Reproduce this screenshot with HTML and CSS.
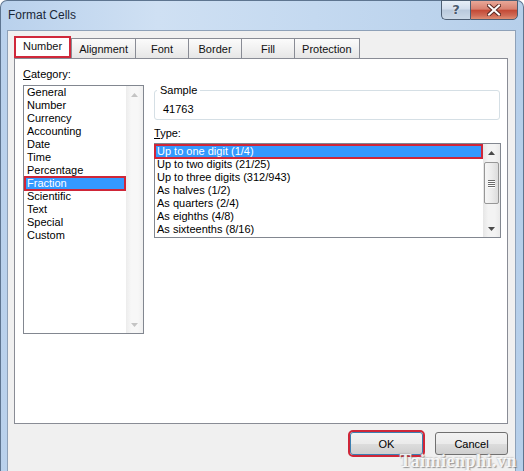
FILE: index.html
```html
<!DOCTYPE html>
<html>
<head>
<meta charset="utf-8">
<title>Format Cells</title>
<link rel="stylesheet" href="styles.css">
</head>
<body>
<div class="window">
  <div class="titlebar">
    <span class="title">Format Cells</span>
    <div class="caption-btns">
      <div class="cap help">?</div>
      <div class="cap close">
        <svg width="14" height="12" viewBox="0 0 14 12"><path d="M2 1.5 L12 10.5 M12 1.5 L2 10.5" stroke="#5a2a24" stroke-width="4" stroke-linecap="square"/><path d="M2 1.5 L12 10.5 M12 1.5 L2 10.5" stroke="#ffffff" stroke-width="2" stroke-linecap="square"/></svg>
      </div>
    </div>
  </div>
  <div class="client">
    <div class="tabs">
      <div class="tab active">Number</div>
      <div class="tab">Alignment</div>
      <div class="tab">Font</div>
      <div class="tab">Border</div>
      <div class="tab">Fill</div>
      <div class="tab">Protection</div>
    </div>
    <div class="panel">
      <div class="col-left">
        <div class="label"><u>C</u>ategory:</div>
        <div class="listbox cat-list">
          <ul class="items">
            <li>General</li>
            <li>Number</li>
            <li>Currency</li>
            <li>Accounting</li>
            <li>Date</li>
            <li>Time</li>
            <li>Percentage</li>
            <li class="selected">Fraction</li>
            <li>Scientific</li>
            <li>Text</li>
            <li>Special</li>
            <li>Custom</li>
          </ul>
          <div class="vscroll disabled">
            <div class="arrow"><svg width="7" height="4" viewBox="0 0 7 4"><path d="M0 4 L3.5 0 L7 4 Z" fill="#c4c4c4"/></svg></div>
            <div class="track"></div>
            <div class="arrow"><svg width="7" height="4" viewBox="0 0 7 4"><path d="M0 0 L7 0 L3.5 4 Z" fill="#c4c4c4"/></svg></div>
          </div>
        </div>
      </div>
      <div class="col-right">
        <fieldset class="sample">
          <legend>Sample</legend>
          <div class="sample-value">41763</div>
        </fieldset>
        <div class="label type-label"><u>T</u>ype:</div>
        <div class="listbox type-list">
          <ul class="items">
            <li class="selected">Up to one digit (1/4)</li>
            <li>Up to two digits (21/25)</li>
            <li>Up to three digits (312/943)</li>
            <li>As halves (1/2)</li>
            <li>As quarters (2/4)</li>
            <li>As eighths (4/8)</li>
            <li>As sixteenths (8/16)</li>
          </ul>
          <div class="vscroll">
            <div class="arrow"><svg width="7" height="4" viewBox="0 0 7 4"><path d="M0 4 L3.5 0 L7 4 Z" fill="#4a4a4a"/></svg></div>
            <div class="thumb">
              <span class="grip"></span><span class="grip"></span><span class="grip"></span><span class="grip"></span>
            </div>
            <div class="track"></div>
            <div class="arrow"><svg width="7" height="4" viewBox="0 0 7 4"><path d="M0 0 L7 0 L3.5 4 Z" fill="#4a4a4a"/></svg></div>
          </div>
        </div>
      </div>
    </div>
    <div class="buttons">
      <button class="btn ok">OK</button>
      <button class="btn">Cancel</button>
    </div>
  </div>
  <div class="watermark">Taimienphi.vn</div>
</div>
</body>
</html>
```
FILE: styles.css
```css
* { box-sizing: border-box; }
html, body {
  margin: 0;
  padding: 0;
  background: #ffffff;
}
body {
  width: 524px;
  height: 471px;
  overflow: hidden;
  font-family: "Liberation Sans", Arial, sans-serif;
  font-size: 11px;
  color: #000;
}
.window {
  position: relative;
  width: 524px;
  height: 471px;
  border: 1px solid #5e7590;
  border-bottom: none;
  border-radius: 7px 7px 0 0;
  padding: 0 7px 0 6px;
  background: linear-gradient(90deg, #b9d1ec 0%, #cfe0f3 30%, #c4d9f0 60%, #b6cfea 100%);
  display: flex;
  flex-direction: column;
}
.titlebar {
  height: 29px;
  display: flex;
  align-items: flex-start;
  justify-content: space-between;
}
.title {
  font-size: 12px;
  color: #1b2838;
  line-height: 14px;
  margin-top: 7px;
  margin-left: 1px;
}
.caption-btns {
  display: flex;
  margin-right: -2px;
  margin-top: -1px;
}
.cap {
  height: 20px;
  border: 1px solid #4d5e73;
  display: flex;
  align-items: center;
  justify-content: center;
}
.help {
  width: 29px;
  border-right: none;
  border-radius: 0 0 0 5px;
  background: linear-gradient(180deg, #e6eef7 0%, #d2dded 45%, #b9c9dc 50%, #cbd9e8 100%);
  font-family: "DejaVu Sans", sans-serif;
  font-weight: bold;
  font-size: 13px;
  color: #4a5a6e;
  text-shadow: 0 0 2px #ffffff;
  line-height: 16px;
}
.close {
  width: 48px;
  border-radius: 0 0 5px 0;
  background: linear-gradient(180deg, #e9a898 0%, #d88170 45%, #c44a36 52%, #cf6a55 80%, #e08e73 100%);
}
.client {
  flex: 1;
  background: #f0f0f0;
  border: 1px solid #8ea1b8;
  border-bottom: none;
  padding: 5px 7px 0 6px;
  display: flex;
  flex-direction: column;
}
.tabs {
  display: flex;
  align-items: flex-end;
  height: 22px;
}
.tab {
  height: 20px;
  min-width: 54px;
  padding: 0 7px;
  border: 1px solid #898c95;
  border-bottom: none;
  margin-left: -1px;
  background: linear-gradient(180deg, #fbfbfb 0%, #f1f1f1 50%, #e6e6e6 100%);
  display: flex;
  align-items: center;
  justify-content: center;
  color: #111;
  line-height: 13px;
  padding-top: 2px;
}
.tab.active {
  height: 22px;
  min-width: 56px;
  margin-left: 0;
  margin-right: 1px;
  border: 2px solid #d0283a;
  background: #ffffff;
  padding-top: 0;
  padding-bottom: 2px;
  position: relative;
  z-index: 1;
}
.panel {
  height: 366px;
  background: #ffffff;
  border: 1px solid #898c95;
  padding: 8px 6px 0 8px;
  display: flex;
  gap: 10px;
}
.col-left {
  width: 121px;
  display: flex;
  flex-direction: column;
}
.col-right {
  flex: 1;
  display: flex;
  flex-direction: column;
}
.label {
  line-height: 13px;
  height: 13px;
  margin-top: 1px;
}
.listbox {
  border: 1px solid #828790;
  background: #fff;
  display: flex;
}
.cat-list {
  margin-top: 4px;
  height: 249px;
}
.items {
  list-style: none;
  margin: 0;
  padding: 0 1px;
  flex: 1;
}
.items li {
  height: 13px;
  line-height: 13px;
  padding-left: 2px;
  white-space: nowrap;
}
.items li.selected {
  background: #3399ff;
  color: #ffffff;
  outline: 2px solid #cf2638;
  outline-offset: -1px;
}
.type-list .items {
  padding: 1px 1px 0 0;
}
.type-list .items li {
  padding-left: 2px;
}
.vscroll {
  width: 17px;
  display: flex;
  flex-direction: column;
  background: linear-gradient(90deg, #e6e6e6 0%, #f3f3f3 30%, #f3f3f3 70%, #eaeaea 100%);
}
.vscroll.disabled {
  background: linear-gradient(90deg, #ececec 0%, #f7f7f7 30%, #f7f7f7 70%, #efefef 100%);
}
.arrow {
  height: 17px;
  display: flex;
  align-items: center;
  justify-content: center;
}
.track { flex: 1; }
.thumb {
  height: 42px;
  margin: 1px 1px 0 1px;
  border: 1px solid #979797;
  border-radius: 2px;
  background: linear-gradient(90deg, #f6f6f6 0%, #ececec 50%, #dcdcdc 100%);
  display: flex;
  flex-direction: column;
  align-items: center;
  justify-content: center;
  gap: 1px;
}
.grip {
  width: 7px;
  height: 1px;
  background: #6a6a6a;
  box-shadow: 0 1px 0 #ffffff;
}
.sample {
  margin: 17px 1px 0 0;
  padding: 6px 8px 3px 8px;
  border: 1px solid #d5dfe5;
  border-radius: 3px;
  min-inline-size: 0;
}
.sample legend {
  padding: 0 3px;
  margin-left: -6px;
  line-height: 13px;
}
.sample-value {
  line-height: 13px;
  height: 13px;
}
.type-label {
  margin-top: 7px;
}
.type-list {
  margin-top: 3px;
  height: 95px;
}
.buttons {
  display: flex;
  justify-content: flex-end;
  gap: 12px;
  margin-top: 8px;
}
.btn {
  width: 73px;
  height: 23px;
  border: 1px solid #707070;
  border-radius: 3px;
  background: linear-gradient(180deg, #f2f2f2 0%, #ebebeb 50%, #dddddd 51%, #cfcfcf 100%);
  font-family: "Liberation Sans", Arial, sans-serif;
  font-size: 11px;
  color: #000;
  padding: 0;
}
.btn.ok {
  border-color: #3c7fb1;
  outline: 2px solid #cf2638;
  outline-offset: 0px;
}
.watermark {
  position: absolute;
  right: 6px;
  bottom: 1px;
  line-height: 18px;
  font-family: "Liberation Serif", serif;
  font-weight: bold;
  font-size: 18px;
  letter-spacing: 0.5px;
  color: rgba(255, 255, 255, 0.9);
  text-shadow: 1px 1px 1px rgba(90, 90, 90, 0.6), -1px -1px 1px rgba(160, 160, 160, 0.4);
}
```
